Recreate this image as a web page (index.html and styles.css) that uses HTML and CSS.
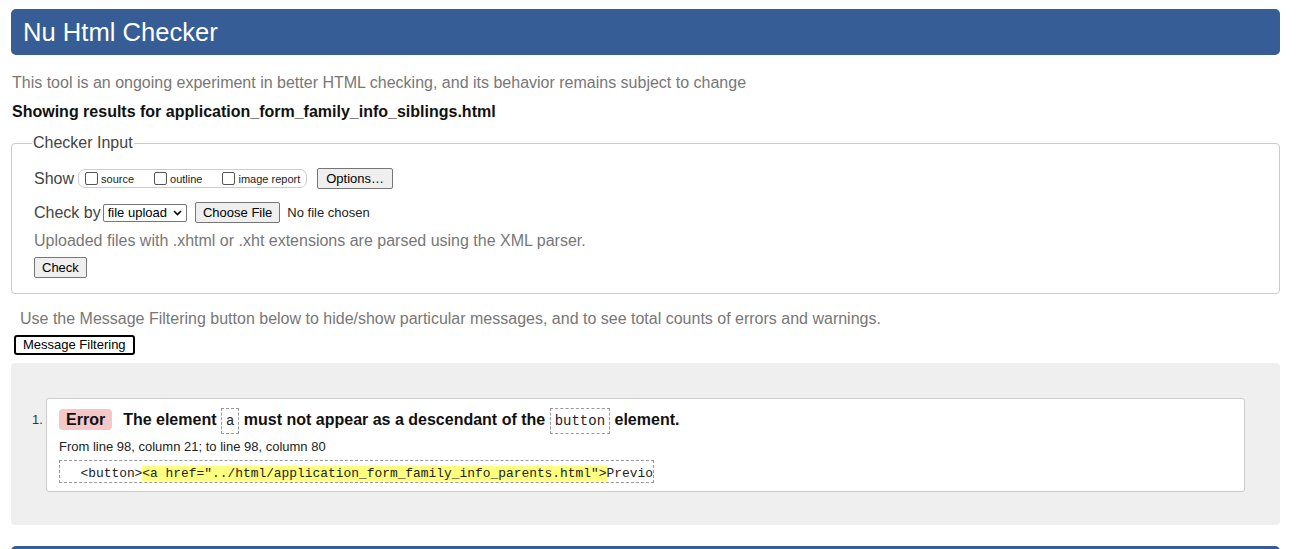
FILE: index.html
```html
<!DOCTYPE html>
<html>
<head>
<meta charset="utf-8">
<link rel="stylesheet" href="styles.css">
</head>
<body>
<div class="page">
  <h1 class="title">Nu Html Checker</h1>
  <p class="intro">This tool is an ongoing experiment in better HTML checking, and its behavior remains subject to change</p>
  <p class="results-for">Showing results for application_form_family_info_siblings.html</p>
  <fieldset class="checker">
    <legend class="legend">Checker Input</legend>
    <div class="row show-row">
      <span class="lbl">Show</span>
      <span class="group">
        <label class="opt"><span class="cb"></span>source</label>
        <label class="opt"><span class="cb"></span>outline</label>
        <label class="opt"><span class="cb"></span>image report</label>
      </span>
      <span class="btn options">Options…</span>
    </div>
    <div class="row by-row">
      <span class="lbl">Check by</span>
      <span class="select">file upload<svg class="chev" width="9" height="6" viewBox="0 0 9 6"><path d="M1 1 L4.5 4.5 L8 1" fill="none" stroke="#000" stroke-width="1.6"/></svg></span>
      <span class="btn choose">Choose File</span>
      <span class="nofile">No file chosen</span>
    </div>
    <p class="note">Uploaded files with .xhtml or .xht extensions are parsed using the XML parser.</p>
    <span class="btn check">Check</span>
  </fieldset>
  <p class="filter-note">Use the Message Filtering button below to hide/show particular messages, and to see total counts of errors and warnings.</p>
  <span class="filter-btn">Message Filtering</span>
  <div class="results">
    <ol class="messages">
      <li class="msg">
        <span class="num">1.</span>
        <div class="box">
          <p class="msg-head"><span class="badge">Error</span><span class="msg-text">The element <code class="c">a</code> must not appear as a descendant of the <code class="c">button</code> element.</span></p>
          <p class="loc">From line 98, column 21; to line 98, column 80</p>
          <p class="extract"><code>&nbsp;&nbsp;&lt;button&gt;<b class="hl">&lt;a href="../html/application_form_family_info_parents.html"&gt;</b>Previo</code></p>
        </div>
      </li>
    </ol>
  </div>
  <div class="bottom-bar"></div>
</div>
</body>
</html>
```
FILE: styles.css
```css
html, body { margin: 0; padding: 0; background: #fff; }
body { font-family: "Liberation Sans", Arial, sans-serif; color: #222; }
.page { padding: 9px 22px 0 11px; }
.title {
  margin: 0; height: 46px; line-height: 46px; background: #365d95; color: #fff;
  font-weight: normal; font-size: 25.6px; padding-left: 12px; border-radius: 5px;
}
.intro { margin: 19px 0 0 1px; font-size: 16px; line-height: 18px; color: #777; }
.results-for { margin: 11px 0 0 1px; font-size: 16px; line-height: 18px; font-weight: bold; color: #111; }
.checker {
  margin: 13px 0 0 0; padding: 8px 22px 12px 22px; border: 1px solid #ccc; border-radius: 4px;
  min-width: 0; box-sizing: border-box; height: 160px;
}
.legend { padding: 0 1px; margin-left: -2px; font-size: 16px; color: #444; }
.row { display: flex; align-items: center; }
.show-row { margin-top: 8px; }
.lbl { font-size: 16px; color: #444; margin-right: 4px; }
.group {
  display: inline-flex; align-items: center; height: 19px; border: 1px solid #ccc; border-radius: 7px;
  padding: 0 6px 0 6px; box-sizing: border-box; margin-right: 10px;
}
.opt { display: inline-flex; align-items: center; font-size: 11px; color: #222; margin-right: 20px; }
.opt:last-child { margin-right: 0; }
.cb { width: 11px; height: 11px; border: 1px solid #555; border-radius: 2px; margin-right: 3px; background: #fff; }
.btn {
  display: inline-block; font-size: 13px; color: #000; background: #efefef; border: 1px solid #767676;
  border-radius: 2px; padding: 0 6px; height: 21px; line-height: 19px; box-sizing: border-box;
}
.options { padding: 0 8px; }
.by-row { margin-top: 13px; }
.by-row .lbl { margin-right: 2px; }
.select {
  display: inline-flex; align-items: center; font-size: 13px; color: #000; border: 1px solid #767676;
  border-radius: 2px; height: 18px; box-sizing: border-box; padding: 0 4px 0 4px; margin-right: 8px;
}
.chev { margin-left: 6px; }
.choose { padding: 0 7px; }
.nofile { font-size: 13px; color: #222; margin-left: 7px; }
.note { margin: 9px 0 0 0; font-size: 16px; line-height: 18px; color: #777; }
.check { margin-top: 7px; padding: 0 7px; }
.filter-note { margin: 16px 0 0 9px; font-size: 16px; line-height: 18px; color: #777; }
.filter-btn {
  display: inline-block; margin: 7px 0 0 3px; font-size: 13px; color: #000; background: #fff;
  border: 2px solid #000; border-radius: 3px; height: 20px; line-height: 16px; padding: 0 7px; box-sizing: border-box;
}
.results {
  margin-top: 8px; background: #efefef; border-radius: 4px; height: 162px; box-sizing: border-box;
  padding: 35px 35px 0 21px;
}
.messages { list-style: none; margin: 0; padding: 0; }
.msg { display: flex; align-items: flex-start; }
.num { font-size: 13px; color: #333; width: 14px; margin-top: 14px; }
.box {
  flex: 1; background: #fff; border: 1px solid #ccc; border-radius: 3px; height: 94px;
  box-sizing: border-box; padding: 6px 12px 0 12px;
}
.box p { margin: 0; }
.msg-head { display: flex; align-items: center; height: 29px; }
.badge {
  display: inline-block; background: #f5c7c7; border-radius: 4px; font-weight: bold; font-size: 16px;
  padding: 0 7px; height: 21px; line-height: 21px; margin-right: 11px; color: #111;
}
.msg-text { font-weight: bold; font-size: 16px; color: #111; }
.c {
  font-family: "Liberation Mono", monospace; font-weight: normal; font-size: 14px; border: 1px dashed #999;
  padding: 4px 4px 4px 4px; color: #222;
}
.loc { font-size: 13px; color: #222; margin-top: 5px !important; line-height: 16px; }
.extract {
  margin-top: 5px !important; display: inline-block; border: 1px dashed #999; height: 23px; box-sizing: border-box;
  padding: 0 0 0 5px; line-height: 21px;
}
.extract code { font-family: "Liberation Mono", monospace; font-size: 12.9px; color: #222; }
.hl { background: #ffff80; font-weight: normal; }
.bottom-bar { margin-top: 21px; height: 10px; background: #365d95; border-radius: 5px 5px 0 0; }
```
